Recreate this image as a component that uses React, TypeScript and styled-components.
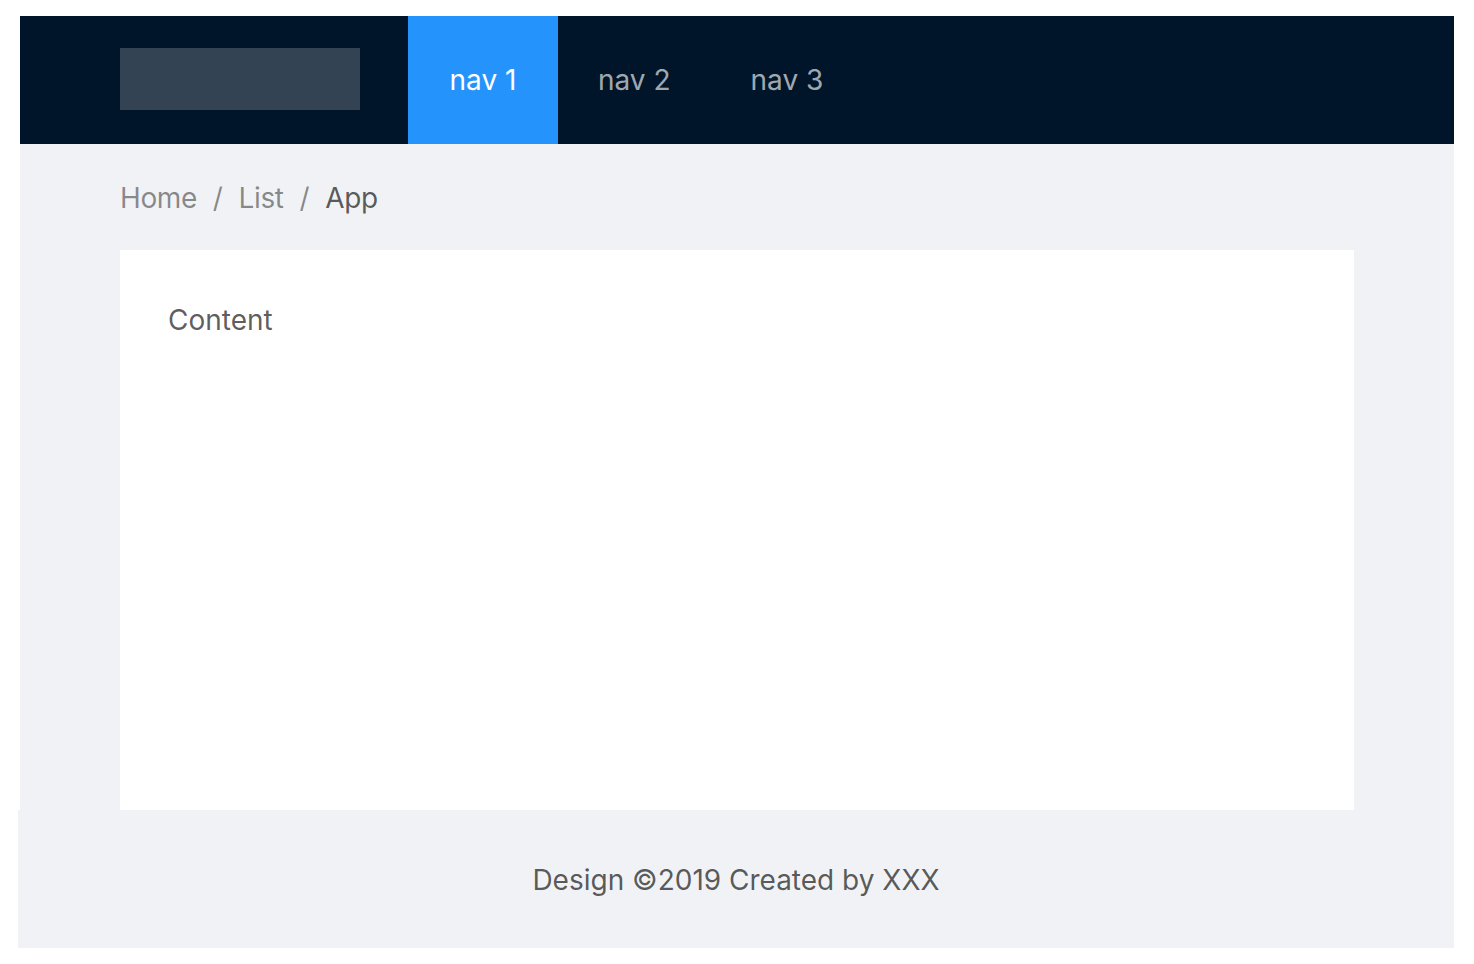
import styled, { createGlobalStyle } from 'styled-components';

const GlobalStyle = createGlobalStyle`
    html, body {
        margin: 0;
        padding: 0;
        background: #ffffff;
    }
    body {
        font-family: Inter, 'Noto Sans', 'Liberation Sans', sans-serif;
        font-size: 28px;
        color: rgba(0, 0, 0, 0.65);
    }
`;

const Layout = styled.div`
    display: flex;
    flex-direction: column;
    margin: 16px 20px 16px 18px;
`;

const Header = styled.header`
    display: flex;
    align-items: flex-start;
    height: 128px;
    margin-left: 2px;
    padding: 0 100px;
    background: #001529;
`;

const Logo = styled.div`
    width: 240px;
    height: 62px;
    margin: 32px 48px 0 0;
    background: rgba(255, 255, 255, 0.2);
`;

const Menu = styled.nav`
    display: flex;
    height: 100%;
`;

const MenuItem = styled.a<{ $active?: boolean }>`
    display: block;
    min-width: 70px;
    padding: 0 40px;
    line-height: 128px;
    text-align: center;
    color: ${(p) => (p.$active ? '#ffffff' : 'rgba(255, 255, 255, 0.65)')};
    background: ${(p) => (p.$active ? '#2593fc' : 'transparent')};
    text-decoration: none;
    cursor: pointer;
`;

const Main = styled.main`
    margin-left: 2px;
    padding: 0 100px;
    background: #f0f2f5;
`;

const Breadcrumb = styled.div`
    display: flex;
    margin: 32px 0;
    line-height: 44px;
    height: 42px;
    letter-spacing: -0.4px;
`;

const Crumb = styled.span<{ $last?: boolean }>`
    color: ${(p) => (p.$last ? 'rgba(0, 0, 0, 0.65)' : 'rgba(0, 0, 0, 0.45)')};
`;

const Separator = styled.span`
    margin: 0 16px;
    color: rgba(0, 0, 0, 0.45);
`;

const Card = styled.div`
    min-height: 560px;
    box-sizing: border-box;
    padding: 48px;
    background: #ffffff;
    line-height: 44px;
`;

const Footer = styled.footer`
    height: 138px;
    box-sizing: border-box;
    padding: 48px 100px;
    background: #f0f2f5;
    text-align: center;
    line-height: 44px;
`;

const crumbs = ['Home', 'List', 'App'];

function App() {
    return (
        <>
            <GlobalStyle />
            <Layout>
                <Header>
                    <Logo />
                    <Menu>
                        <MenuItem $active>nav 1</MenuItem>
                        <MenuItem>nav 2</MenuItem>
                        <MenuItem>nav 3</MenuItem>
                    </Menu>
                </Header>
                <Main>
                    <Breadcrumb>
                        {crumbs.map((c, i) => (
                            <span key={c}>
                                <Crumb $last={i === crumbs.length - 1}>{c}</Crumb>
                                {i < crumbs.length - 1 && <Separator>/</Separator>}
                            </span>
                        ))}
                    </Breadcrumb>
                    <Card>Content</Card>
                </Main>
                <Footer>Design ©2019 Created by XXX</Footer>
            </Layout>
        </>
    );
}

export default App;
